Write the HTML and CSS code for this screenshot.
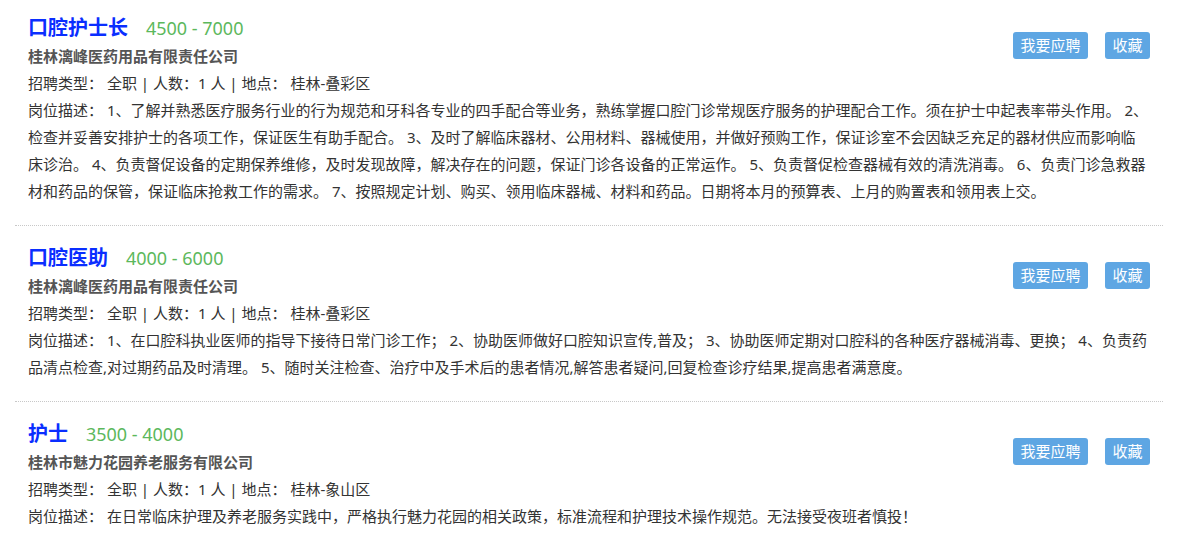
FILE: index.html
```html
<!DOCTYPE html>
<html>
<head>
  <meta charset="utf-8">
  <title>招聘信息</title>
  <link rel="stylesheet" href="styles.css">
</head>
<body>
  <div class="job-list">

    <div class="job">
      <div class="actions">
        <button class="btn">我要应聘</button>
        <button class="btn">收藏</button>
      </div>
      <div class="job-title">
        <a class="name" href="#">口腔护士长</a>
        <span class="salary">4500 - 7000</span>
      </div>
      <div class="company">桂林漓峰医药用品有限责任公司</div>
      <div class="info">招聘类型： 全职 | 人数：1 人 | 地点： 桂林-叠彩区</div>
      <div class="desc">岗位描述： 1、了解并熟悉医疗服务行业的行为规范和牙科各专业的四手配合等业务，熟练掌握口腔门诊常规医疗服务的护理配合工作。须在护士中起表率带头作用。 2、检查并妥善安排护士的各项工作，保证医生有助手配合。 3、及时了解临床器材、公用材料、器械使用，并做好预购工作，保证诊室不会因缺乏充足的器材供应而影响临床诊治。 4、负责督促设备的定期保养维修，及时发现故障，解决存在的问题，保证门诊各设备的正常运作。 5、负责督促检查器械有效的清洗消毒。 6、负责门诊急救器材和药品的保管，保证临床抢救工作的需求。 7、按照规定计划、购买、领用临床器械、材料和药品。日期将本月的预算表、上月的购置表和领用表上交。</div>
    </div>

    <div class="job">
      <div class="actions">
        <button class="btn">我要应聘</button>
        <button class="btn">收藏</button>
      </div>
      <div class="job-title">
        <a class="name" href="#">口腔医助</a>
        <span class="salary">4000 - 6000</span>
      </div>
      <div class="company">桂林漓峰医药用品有限责任公司</div>
      <div class="info">招聘类型： 全职 | 人数：1 人 | 地点： 桂林-叠彩区</div>
      <div class="desc">岗位描述： 1、在口腔科执业医师的指导下接待日常门诊工作； 2、协助医师做好口腔知识宣传,普及； 3、协助医师定期对口腔科的各种医疗器械消毒、更换； 4、负责药品清点检查,对过期药品及时清理。 5、随时关注检查、治疗中及手术后的患者情况,解答患者疑问,回复检查诊疗结果,提高患者满意度。</div>
    </div>

    <div class="job">
      <div class="actions">
        <button class="btn">我要应聘</button>
        <button class="btn">收藏</button>
      </div>
      <div class="job-title">
        <a class="name" href="#">护士</a>
        <span class="salary">3500 - 4000</span>
      </div>
      <div class="company">桂林市魅力花园养老服务有限公司</div>
      <div class="info">招聘类型： 全职 | 人数：1 人 | 地点： 桂林-象山区</div>
      <div class="desc">岗位描述： 在日常临床护理及养老服务实践中，严格执行魅力花园的相关政策，标准流程和护理技术操作规范。无法接受夜班者慎投！</div>
    </div>

  </div>
</body>
</html>
```

FILE: styles.css
```css
body {
  margin: 0;
  font-family: "Noto Sans", "Noto Sans CJK SC", sans-serif;
  font-size: 15px;
  color: #333;
  background: #fff;
}
.job-list {
  margin: 0 14px 0 15px;
}
.job {
  padding: 17px 14px 20px 13px;
  border-bottom: 1px dotted #c8c8c8;
}
.job:first-child {
  padding-top: 13px;
}
.actions {
  float: right;
  margin-top: 19px;
  margin-right: -1px;
  display: flex;
  gap: 17px;
}
.btn {
  height: 27px;
  padding: 0 7.5px;
  border: none;
  border-radius: 3px;
  background: #5ea6e3;
  color: #fff;
  font-family: inherit;
  font-size: 15px;
  line-height: 27px;
  cursor: pointer;
}
.job-title {
  height: 30px;
  line-height: 30px;
}
.name {
  color: #0a2eff;
  font-size: 20px;
  font-weight: bold;
  text-decoration: none;
}
.salary {
  margin-left: 14px;
  color: #5cb85c;
  font-size: 18px;
}
.company {
  line-height: 27px;
  color: #555;
  font-weight: bold;
}
.info, .desc {
  line-height: 27px;
}
```
